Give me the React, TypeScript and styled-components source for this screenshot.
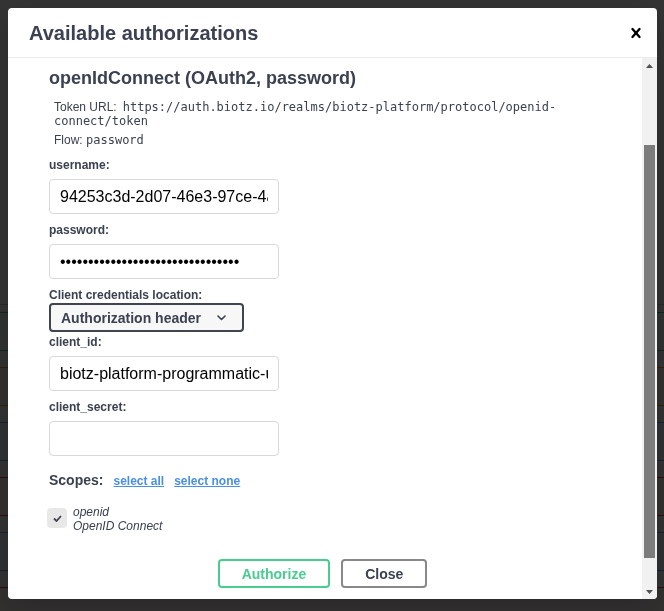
import styled, { createGlobalStyle } from "styled-components";

const GlobalStyle = createGlobalStyle`
  html, body {
    margin: 0;
    padding: 0;
    background: #fff;
  }
  body {
    font-family: "Liberation Sans", Arial, sans-serif;
    color: #3b4151;
  }
`;

// the swagger page that sits behind the dark overlay
const Page = styled.div`
  height: 611px;
  overflow: hidden;
  padding-top: 304px;
  box-sizing: border-box;
`;

const SectionRule = styled.div`
  height: 7px;
  border-top: 1px solid rgba(59, 65, 81, 0.3);
`;

const OpBlock = styled.div<{ $color: string }>`
  height: 39px;
  box-sizing: border-box;
  margin: 0 -10px 16px;
  border: 1px solid ${(p) => p.$color};
  background: ${(p) => p.$color}14;
`;

const Backdrop = styled.div`
  position: fixed;
  inset: 0;
  background: rgba(0, 0, 0, 0.8);
  display: flex;
  align-items: flex-start;
  padding: 8px 0 0 8px;
`;

const Modal = styled.div`
  width: 649px;
  height: 591px;
  background: #fff;
  border-radius: 4px;
  box-shadow: 0 10px 30px 0 rgba(0, 0, 0, 0.2);
  display: flex;
  flex-direction: column;
  overflow: hidden;
`;

const Header = styled.div`
  flex: none;
  height: 49px;
  border-bottom: 1px solid #ebebeb;
  display: flex;
  align-items: center;
  justify-content: space-between;
  padding: 0 11px 0 21px;
`;

const Title = styled.h3`
  margin: 0;
  font-size: 20px;
  line-height: 24px;
  font-weight: 700;
  color: #3b4151;
`;

const CloseIcon = styled.button`
  border: 0;
  background: none;
  padding: 0;
  width: 20px;
  height: 20px;
  display: flex;
  cursor: pointer;
`;

const Body = styled.div`
  flex: 1;
  min-height: 0;
  display: flex;
`;

const Content = styled.div`
  flex: 1;
  padding: 9px 20px 0 41px;
  overflow: hidden;
`;

const SchemeTitle = styled.h4`
  margin: 0;
  font-size: 18px;
  line-height: 22px;
  font-weight: 700;
  color: #3b4151;
`;

const FlowInfo = styled.div`
  margin-top: 11px;
  padding-left: 5px;
  display: flex;
  flex-direction: column;
  gap: 5px;
`;

const InfoLine = styled.p`
  margin: 0;
  font-size: 12px;
  line-height: 14px;
  color: #3b4151;
`;

const Code = styled.code<{ $gap?: number }>`
  margin-left: ${(p) => p.$gap ?? 0}px;
  font-family: "DejaVu Sans Mono", monospace;
  font-size: 12px;
`;

const Fields = styled.div`
  margin-top: 11px;
  display: flex;
  flex-direction: column;
`;

const Field = styled.div<{ $tight?: boolean }>`
  display: flex;
  flex-direction: column;
  align-items: flex-start;
  margin-bottom: ${(p) => (p.$tight ? "3px" : "9px")};
`;

const Label = styled.label<{ $tight?: boolean }>`
  font-size: 12px;
  line-height: 15px;
  font-weight: 700;
  color: #3b4151;
  margin-bottom: ${(p) => (p.$tight ? "0" : "6px")};
`;

const Input = styled.input`
  box-sizing: border-box;
  width: 230px;
  height: 35px;
  padding: 8px 10px;
  border: 1px solid #d9d9d9;
  border-radius: 4px;
  background: #fff;
  font-family: "Liberation Sans", Arial, sans-serif;
  font-size: 16px;
  color: #000;
  outline: none;
`;

const SelectBox = styled.div`
  box-sizing: border-box;
  height: 29px;
  width: 195px;
  display: flex;
  align-items: center;
  justify-content: space-between;
  padding: 0 16px 0 10px;
  border: 2px solid #41444e;
  border-radius: 4px;
  background: #f7f7f7;
  font-size: 14px;
  font-weight: 700;
  color: #3b4151;
`;

const ScopesRow = styled.div`
  margin-top: 7px;
  display: flex;
  align-items: baseline;
`;

const ScopesTitle = styled.h2`
  margin: 0;
  font-size: 14px;
  line-height: 17px;
  font-weight: 700;
  color: #3b4151;
`;

const ScopeLink = styled.a`
  margin-left: 10px;
  font-size: 12px;
  font-weight: 700;
  color: #4990e2;
  text-decoration: underline;
  cursor: pointer;
`;

const ScopeItem = styled.div`
  margin-top: 17px;
  display: flex;
  align-items: flex-start;
`;

const CheckBox = styled.span`
  flex: none;
  width: 16px;
  height: 16px;
  margin: 4px 8px 0 0;
  background: #e8e8e8;
  box-shadow: 0 0 0 2px #e8e8e8;
  border-radius: 2px;
  display: flex;
  align-items: center;
  justify-content: center;
`;

const ScopeText = styled.div`
  font-size: 12px;
  line-height: 13.5px;
  font-style: italic;
  color: #3b4151;
`;

const Buttons = styled.div`
  margin-top: 26px;
  display: flex;
  justify-content: center;
  gap: 11px;
  padding-right: 26px;
`;

const Button = styled.button<{ $tone: "green" | "gray" }>`
  box-sizing: border-box;
  height: 29px;
  padding: 0 22px;
  border: 2px solid ${(p) => (p.$tone === "green" ? "#49cc90" : "#888")};
  border-radius: 4px;
  background: transparent;
  font-family: "Liberation Sans", Arial, sans-serif;
  font-size: 14px;
  font-weight: 700;
  color: ${(p) => (p.$tone === "green" ? "#49cc90" : "#3b4151")};
  cursor: pointer;
`;

const ScrollBar = styled.div`
  flex: none;
  width: 15px;
  background: #f1f1f1;
  display: flex;
  flex-direction: column;
`;

const ScrollArrow = styled.div`
  flex: none;
  height: 15px;
  display: flex;
  align-items: center;
  justify-content: center;
`;

const ScrollTrack = styled.div`
  flex: 1;
  padding: 0 2px;
`;

const Thumb = styled.div`
  background: #7c7c7c;
`;

const opBlocks = ["#49cc90", "#fca130", "#61affe", "#f93e3e", "#61affe", "#f93e3e"];

const Arrow = ({ down }: { down?: boolean }) => (
  <svg width="7" height="4" viewBox="0 0 7 4">
    <polygon points={down ? "0,0 7,0 3.5,4" : "0,4 7,4 3.5,0"} fill="#505050" />
  </svg>
);

const App = () => {
  return (
    <>
      <GlobalStyle />
      <Page>
        <SectionRule />
        {opBlocks.map((c, i) => (
          <OpBlock key={i} $color={c} />
        ))}
      </Page>
      <Backdrop>
        <Modal>
          <Header>
            <Title>Available authorizations</Title>
            <CloseIcon aria-label="Close">
              <svg width="20" height="20" viewBox="0 0 20 20">
                <path
                  d="M14.348 14.849a1.2 1.2 0 01-1.697 0L10 11.819l-2.651 3.029a1.2 1.2 0 11-1.697-1.697l2.758-3.15-2.759-3.152a1.2 1.2 0 111.697-1.697L10 8.183l2.651-3.031a1.2 1.2 0 111.697 1.697l-2.758 3.152 2.758 3.15a1.2 1.2 0 010 1.698z"
                  fill="#000"
                />
              </svg>
            </CloseIcon>
          </Header>
          <Body>
            <Content>
              <SchemeTitle>openIdConnect (OAuth2, password)</SchemeTitle>
              <FlowInfo>
                <InfoLine>
                  Token URL:
                  <Code $gap={6}>https://auth.biotz.io/realms/biotz-platform/protocol/openid-connect/token</Code>
                </InfoLine>
                <InfoLine>
                  Flow: <Code>password</Code>
                </InfoLine>
              </FlowInfo>
              <Fields>
                <Field>
                  <Label>username:</Label>
                  <Input type="text" defaultValue="94253c3d-2d07-46e3-97ce-4a1b2c3d4e5f" />
                </Field>
                <Field>
                  <Label>password:</Label>
                  <Input type="password" defaultValue="abcdefghijklmnopqrstuvwxyz012345" />
                </Field>
                <Field $tight>
                  <Label $tight>Client credentials location:</Label>
                  <SelectBox>
                    <span>Authorization header</span>
                    <svg width="9" height="6" viewBox="0 0 9 6">
                      <path d="M1 1l3.5 3.5L8 1" fill="none" stroke="#3b4151" strokeWidth="1.6" strokeLinecap="round" strokeLinejoin="round" />
                    </svg>
                  </SelectBox>
                </Field>
                <Field>
                  <Label>client_id:</Label>
                  <Input type="text" defaultValue="biotz-platform-programmatic-user" />
                </Field>
                <Field>
                  <Label>client_secret:</Label>
                  <Input type="password" defaultValue="" />
                </Field>
              </Fields>
              <ScopesRow>
                <ScopesTitle>Scopes:</ScopesTitle>
                <ScopeLink>select all</ScopeLink>
                <ScopeLink>select none</ScopeLink>
              </ScopesRow>
              <ScopeItem>
                <CheckBox>
                  <svg width="9" height="7" viewBox="0 0 9 7">
                    <path d="M1 3.5l2.5 2.5L8 1" fill="none" stroke="#41444e" strokeWidth="1.8" />
                  </svg>
                </CheckBox>
                <ScopeText>
                  <div>openid</div>
                  <div>OpenID Connect</div>
                </ScopeText>
              </ScopeItem>
              <Buttons>
                <Button $tone="green">Authorize</Button>
                <Button $tone="gray">Close</Button>
              </Buttons>
            </Content>
            <ScrollBar>
              <ScrollArrow>
                <Arrow />
              </ScrollArrow>
              <ScrollTrack>
                <Thumb style={{ marginTop: 72, height: 413 }} />
              </ScrollTrack>
              <ScrollArrow>
                <Arrow down />
              </ScrollArrow>
            </ScrollBar>
          </Body>
        </Modal>
      </Backdrop>
    </>
  );
};

export default App;
